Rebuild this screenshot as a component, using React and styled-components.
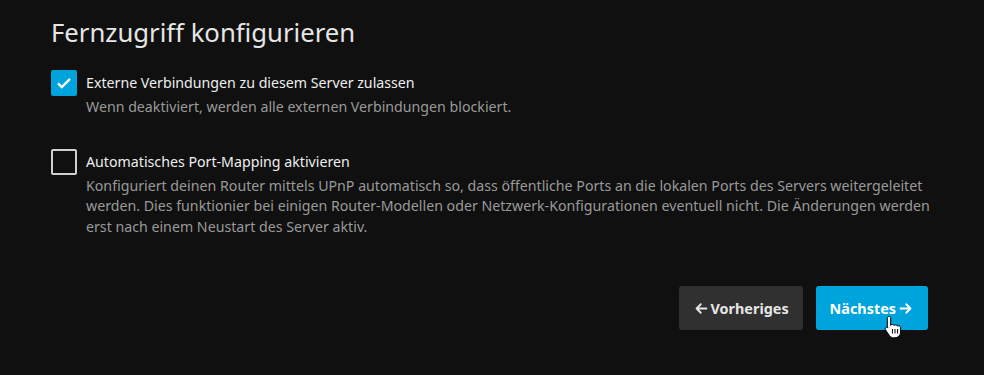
import React from "react";
import styled, { createGlobalStyle } from "styled-components";

const GlobalStyle = createGlobalStyle`
  html, body {
    margin: 0;
    padding: 0;
    background: #101010;
  }
  body {
    font-family: "Noto Sans", "Open Sans", sans-serif;
    color: rgba(255, 255, 255, 0.87);
  }
`;

const Page = styled.div`
  position: relative;
  width: 984px;
  height: 375px;
  box-sizing: border-box;
  padding: 17px 50px 0 51px;
  overflow: hidden;
`;

const Title = styled.h1`
  margin: 0 0 21px;
  font-size: 25.7px;
  font-weight: 400;
  line-height: 32px;
  color: #e6e6e6;
`;

const Option = styled.div`
  display: grid;
  grid-template-columns: 26px 1fr;
  column-gap: 9px;
  margin-bottom: ${(p) => p.$gap || 0}px;
`;

const Box = styled.span`
  width: 26px;
  height: 26px;
  box-sizing: border-box;
  border-radius: 2px;
  display: flex;
  align-items: center;
  justify-content: center;
  background: ${(p) => (p.$checked ? "#00a4dc" : "transparent")};
  border: ${(p) => (p.$checked ? "none" : "2px solid #d0d0d0")};
`;

const Label = styled.div`
  font-size: 14.2px;
  line-height: 26px;
  color: #eeeeee;
`;

const Description = styled.div`
  grid-column: 2;
  font-size: 14.2px;
  line-height: 20.5px;
  color: #9a9a9a;
  margin-top: 1px;
`;

const Actions = styled.div`
  display: flex;
  justify-content: flex-end;
  gap: 13px;
  margin-top: 49px;
  padding-right: 6px;
`;

const Button = styled.button`
  height: 44px;
  padding: 0 14px;
  border: none;
  border-radius: 3px;
  font-family: inherit;
  font-size: 14.4px;
  font-weight: 700;
  display: flex;
  align-items: center;
  gap: 1px;
  color: ${(p) => (p.$primary ? "#ffffff" : "#e6e6e6")};
  background: ${(p) => (p.$primary ? "#00a4dc" : "#303030")};
`;

const Cursor = styled.svg`
  position: absolute;
  left: 884px;
  top: 315px;
`;

function Check() {
  return (
    <svg width="18" height="18" viewBox="0 0 24 24">
      <path d="M4 12.5l5 5L20 6.5" fill="none" stroke="#fff" strokeWidth="3" />
    </svg>
  );
}

function Arrow({ dir }) {
  const d = dir === "left" ? "M19 12H5M11 6l-6 6 6 6" : "M5 12h14M13 6l6 6-6 6";
  return (
    <svg width="17" height="17" viewBox="0 0 24 24">
      <path d={d} fill="none" stroke="currentColor" strokeWidth="2.6" strokeLinecap="round" strokeLinejoin="round" />
    </svg>
  );
}

function Hand() {
  return (
    <Cursor width="18" height="24" viewBox="0 0 18 24">
      <path
        d="M5 1.5c1 0 1.7.7 1.7 1.7v7.2c.3-.6 1-1 1.7-1 .9 0 1.5.5 1.7 1.2.3-.5.9-.8 1.6-.8 1 0 1.6.6 1.8 1.4.3-.3.8-.5 1.3-.5 1 0 1.8.8 1.8 1.8v4.5c0 3.2-2.4 5.8-5.6 5.8H9.6c-1.8 0-3.3-.9-4.3-2.3L1.5 14.8c-.5-.8-.3-1.8.4-2.3.7-.5 1.6-.4 2.1.2l-.7-.8V3.2C3.3 2.2 4 1.5 5 1.5z"
        fill="#fff"
        stroke="#000"
        strokeWidth="1"
      />
      <path d="M8.4 14v4.5M11 14v4.5M13.6 14v4.5" stroke="#000" strokeWidth="1" />
    </Cursor>
  );
}

export default function App() {
  return (
    <>
      <GlobalStyle />
      <Page>
        <Title>Fernzugriff konfigurieren</Title>
        <Option $gap={31}>
          <Box $checked>
            <Check />
          </Box>
          <Label>Externe Verbindungen zu diesem Server zulassen</Label>
          <Description>
            Wenn deaktiviert, werden alle externen Verbindungen blockiert.
          </Description>
        </Option>
        <Option>
          <Box />
          <Label>Automatisches Port-Mapping aktivieren</Label>
          <Description>
            Konfiguriert deinen Router mittels UPnP automatisch so, dass
            öffentliche Ports an die lokalen Ports des Servers weitergeleitet
            werden. Dies funktionier bei einigen Router-Modellen oder
            Netzwerk-Konfigurationen eventuell nicht. Die Änderungen werden
            erst nach einem Neustart des Server aktiv.
          </Description>
        </Option>
        <Actions>
          <Button>
            <Arrow dir="left" />
            Vorheriges
          </Button>
          <Button $primary>
            Nächstes
            <Arrow dir="right" />
          </Button>
        </Actions>
        <Hand />
      </Page>
    </>
  );
}
